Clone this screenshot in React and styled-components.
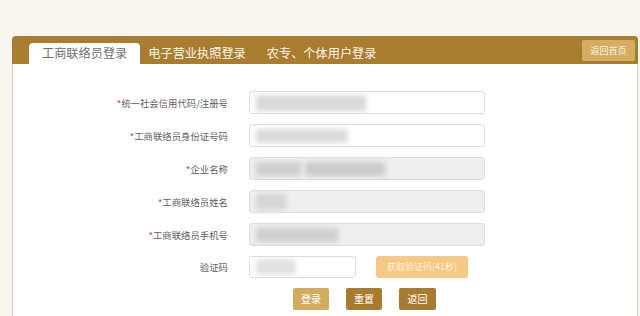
import React from 'react';
import styled, { createGlobalStyle } from 'styled-components';

const Global = createGlobalStyle`
  html, body {
    margin: 0;
    padding: 0;
    background: #f9f6f0;
    font-family: "Noto Sans CJK SC", "Noto Sans", sans-serif;
  }
`;

const Page = styled.div`
  width: 640px;
  height: 316px;
  overflow: hidden;
  padding: 36px 0 0 12px;
  box-sizing: border-box;
`;

const Panel = styled.div`
  width: 626px;
  height: 280px;
  background: #fff;
  border-left: 1px solid #cfcbc4;
  border-right: 1px solid #cfcbc4;
  border-radius: 4px 4px 0 0;
  box-sizing: border-box;
`;

const Header = styled.div`
  display: flex;
  align-items: flex-end;
  height: 28px;
  margin: 0 -1px;
  background: #a97c2f;
  border-radius: 4px 4px 0 0;
  padding-left: 17px;
  padding-right: 3px;
`;

const Tab = styled.div`
  height: 21px;
  line-height: 21px;
  padding: 0 ${p => (p.active ? 13 : 0)}px;
  margin-right: ${p => p.gap || 0}px;
  font-size: 12.2px;
  color: ${p => (p.active ? '#707070' : '#fdf8ee')};
  background: ${p => (p.active ? '#fff' : 'transparent')};
  border-radius: 4px 4px 0 0;
  white-space: nowrap;
`;

const HomeButton = styled.div`
  margin-left: auto;
  align-self: center;
  width: 53px;
  height: 21px;
  line-height: 21px;
  text-align: center;
  font-size: 9px;
  color: #fbf3e2;
  background: #d5ad62;
  border-radius: 2px;
`;

const Form = styled.div`
  display: grid;
  grid-template-columns: 215px 236px;
  column-gap: 21px;
  row-gap: 10px;
  padding-top: 27px;
  align-items: center;
`;

const Label = styled.div`
  text-align: right;
  font-size: 9.4px;
  color: #5e5e5e;
  white-space: nowrap;
`;

const Star = styled.span`
  color: #e23b2e;
`;

const Input = styled.div`
  display: flex;
  align-items: center;
  width: ${p => p.width || 236}px;
  height: ${p => p.height || 23}px;
  box-sizing: border-box;
  border: 1px solid #dcdcdc;
  border-radius: 3px;
  background: ${p => (p.disabled ? '#eeeeee' : '#fff')};
  padding-left: ${p => p.pad || 6}px;
  gap: 4px;
  overflow: hidden;
`;

const Blur = styled.span`
  display: block;
  width: ${p => p.w}px;
  height: ${p => p.h || 14}px;
  background: ${p => p.c || '#d6d6d6'};
  filter: blur(2.5px);
  flex: none;
`;

const CodeRow = styled.div`
  display: flex;
  align-items: center;
  gap: 20px;
`;

const SmsButton = styled.div`
  width: 92px;
  height: 22px;
  line-height: 22px;
  text-align: center;
  font-size: 9px;
  color: #fff3dc;
  background: #f6c886;
  border-radius: 3px;
`;

const Actions = styled.div`
  display: flex;
  gap: 17px;
  padding-left: 44px;
`;

const Button = styled.div`
  width: ${p => p.w || 36}px;
  height: 22px;
  line-height: 22px;
  text-align: center;
  font-size: 10px;
  color: #fff;
  background: ${p => (p.light ? '#d4aa5f' : '#a87b2e')};
  border-radius: 2px;
`;

const Field = ({ label, required = true, disabled, children }) => (
  <>
    <Label>
      {required && <Star>*</Star>}
      {label}
    </Label>
    <Input disabled={disabled}>{children}</Input>
  </>
);

export default function App() {
  return (
    <Page>
      <Global />
      <Panel>
        <Header>
          <Tab active gap={8}>工商联络员登录</Tab>
          <Tab gap={21}>电子营业执照登录</Tab>
          <Tab>农专、个体用户登录</Tab>
          <HomeButton>返回首页</HomeButton>
        </Header>
        <Form>
          <Field label="统一社会信用代码/注册号">
            <Blur w={110} h={16} c="#d9d9d9" />
          </Field>
          <Field label="工商联络员身份证号码">
            <Blur w={92} h={14} c="#dcdcdc" />
          </Field>
          <Field label="企业名称" disabled>
            <Blur w={45} h={14} c="#cfcfcf" />
            <Blur w={80} h={14} c="#cbcbcb" />
          </Field>
          <Field label="工商联络员姓名" disabled>
            <Blur w={30} h={16} c="#d6d6d6" />
          </Field>
          <Field label="工商联络员手机号" disabled>
            <Blur w={82} h={14} c="#d0d0d0" />
          </Field>
          <Label>验证码</Label>
          <CodeRow>
            <Input width={107} height={22}>
              <Blur w={40} h={16} c="#e2e2e2" />
            </Input>
            <SmsButton>获取验证码(41秒)</SmsButton>
          </CodeRow>
          <div />
          <Actions>
            <Button light>登录</Button>
            <Button>重置</Button>
            <Button w={37}>返回</Button>
          </Actions>
        </Form>
      </Panel>
    </Page>
  );
}
